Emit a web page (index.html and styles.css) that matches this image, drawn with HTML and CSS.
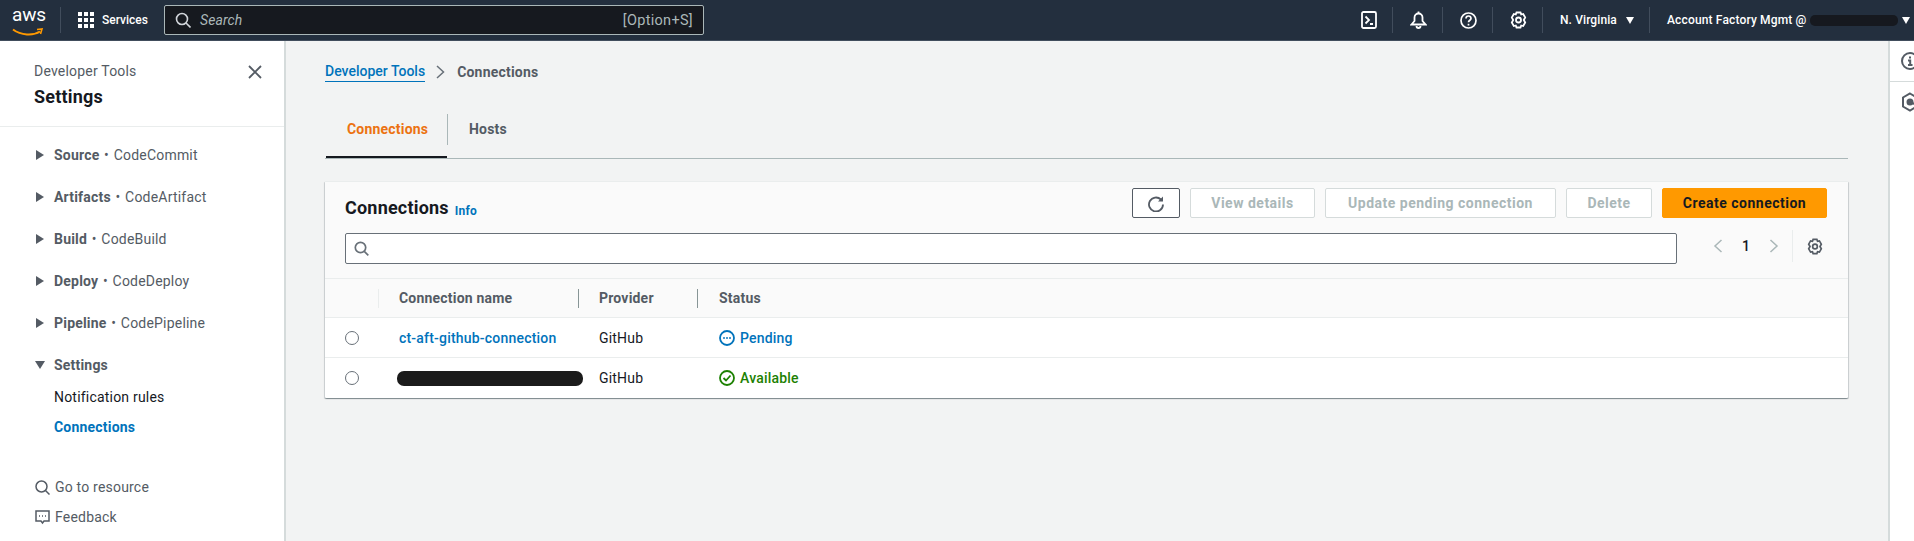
FILE: index.html
```html
<!DOCTYPE html>
<html lang="en">
<head>
  <meta charset="UTF-8" />
  <title>Connections</title>
  <link rel="stylesheet" href="styles.css">
</head>
<body>
  <header class="topbar">
    <div class="logo">
      <span class="logo-text">aws</span>
      <svg class="logo-smile" width="32" height="9" viewBox="0 0 32 9"><path d="M1 1.500C9 7.500 21 8 28 3.500" fill="none" stroke="#f90" stroke-width="2"/><path d="M25 1.500l5-.5-1.500 5" fill="none" stroke="#f90" stroke-width="1.600"/></svg>
    </div>
    <div class="services">
      <svg width="16" height="16" viewBox="0 0 16 16" fill="#fff"><rect width="4" height="4"/><rect x="6" width="4" height="4"/><rect x="12" width="4" height="4"/><rect y="6" width="4" height="4"/><rect x="6" y="6" width="4" height="4"/><rect x="12" y="6" width="4" height="4"/><rect y="12" width="4" height="4"/><rect x="6" y="12" width="4" height="4"/><rect x="12" y="12" width="4" height="4"/></svg>
      <span>Services</span>
    </div>
    <div class="top-search">
      <svg width="16" height="16" viewBox="0 0 16 16" fill="none" stroke="#d1d5db" stroke-width="1.600"><circle cx="7" cy="7" r="5.500"/><path d="M11 11l4.500 4.500"/></svg>
      <span class="top-search-text">Search</span>
      <span class="top-search-key">[Option+S]</span>
    </div>
    <div class="top-icons">
      <div class="top-icon"><svg width="16" height="18" viewBox="0 0 16 18" fill="none" stroke="#fff" stroke-width="1.800"><rect x="1" y="1" width="14" height="16" rx="1.500"/><path d="M4.500 5.500L8 9l-3.500 3.500M9 13h3"/></svg></div>
      <div class="top-icon"><svg width="17" height="18" viewBox="0 0 17 18" fill="none" stroke="#fff" stroke-width="1.800"><path d="M1.500 13.500L4.500 10V6.500a4 4 0 018 0V10l3 3.500z"/><path d="M6.500 15a2 2 0 004 0"/><path d="M8.500 2.500V.5"/></svg></div>
      <div class="top-icon"><svg width="17" height="17" viewBox="0 0 17 17" fill="none" stroke="#fff" stroke-width="1.700"><circle cx="8.500" cy="8.500" r="7.500"/><path d="M6 6.500a2.500 2.500 0 115 0c0 1.700-2.500 1.900-2.500 3.800"/><path d="M8.500 11.800v1.700"/></svg></div>
      <div class="top-icon"><svg width="17" height="18" viewBox="0 0 17 18" fill="none" stroke="#fff" stroke-width="1.800"><path d="M6.500 1.500h4l.7 2 2-.5 2 3.500-1.400 2.500 1.400 2.500-2 3.500-2-.5-.7 2h-4l-.7-2-2 .5-2-3.500L3.200 9 1.800 6.500l2-3.500 2 .5z"/><circle cx="8.500" cy="9" r="2.500"/></svg></div>
      <div class="top-menu region">N. Virginia <span class="caret"></span></div>
      <div class="top-menu account">Account Factory Mgmt @ <span class="redact-top"></span><span class="caret"></span></div>
    </div>
  </header>

  <div class="page">
    <aside class="sidebar">
      <div class="side-head">
        <div>
          <div class="side-service">Developer Tools</div>
          <div class="side-title">Settings</div>
        </div>
        <svg class="side-close" width="14" height="14" viewBox="0 0 14 14" fill="none" stroke="#545b64" stroke-width="1.800"><path d="M1 1l12 12M13 1L1 13"/></svg>
      </div>
      <nav class="side-nav">
        <div class="nav-group"><span class="tri-right"></span><b>Source</b> • CodeCommit</div>
        <div class="nav-group"><span class="tri-right"></span><b>Artifacts</b> • CodeArtifact</div>
        <div class="nav-group"><span class="tri-right"></span><b>Build</b> • CodeBuild</div>
        <div class="nav-group"><span class="tri-right"></span><b>Deploy</b> • CodeDeploy</div>
        <div class="nav-group"><span class="tri-right"></span><b>Pipeline</b> • CodePipeline</div>
        <div class="nav-group open"><span class="tri-down"></span><b>Settings</b></div>
        <div class="nav-sub">Notification rules</div>
        <div class="nav-sub active">Connections</div>
      </nav>
      <div class="side-foot">
        <div class="foot-item"><svg width="15" height="15" viewBox="0 0 15 15" fill="none" stroke="#545b64" stroke-width="1.500"><circle cx="6.500" cy="6.500" r="5.500"/><path d="M10.500 10.500l4 4"/></svg>Go to resource</div>
        <div class="foot-item"><svg width="15" height="15" viewBox="0 0 15 15" fill="none" stroke="#545b64" stroke-width="1.500"><path d="M1 1h13v10H9l-1.500 2L6 11H1z"/><path d="M4 6h1M7 6h1M10 6h1"/></svg>Feedback</div>
      </div>
    </aside>

    <main class="content">
      <div class="crumbs">
        <a class="crumb-link">Developer Tools</a>
        <svg width="9" height="14" viewBox="0 0 9 14" fill="none" stroke="#687078" stroke-width="1.500"><path d="M1 1l6.500 6L1 13"/></svg>
        <span class="crumb-current">Connections</span>
      </div>

      <div class="tabs">
        <div class="tab active">Connections</div>
        <div class="tab">Hosts</div>
      </div>

      <section class="card">
        <div class="card-head">
          <div class="card-top">
            <h2 class="card-title">Connections</h2>
            <a class="info">Info</a>
            <div class="actions">
              <button class="btn icon-btn"><svg width="16" height="17" viewBox="0 0 16 17" fill="none" stroke="#545b64" stroke-width="1.800"><path d="M15 9.500a7 7 0 11-2.100-5L14 5.500"/><path d="M15 1.500v5h-5z" fill="#545b64" stroke="none"/></svg></button>
              <button class="btn view" disabled>View details</button>
              <button class="btn update" disabled>Update pending connection</button>
              <button class="btn del" disabled>Delete</button>
              <button class="btn primary">Create connection</button>
            </div>
          </div>
          <div class="card-filter">
            <div class="filter-box"><svg width="15" height="15" viewBox="0 0 15 15" fill="none" stroke="#687078" stroke-width="1.700"><circle cx="6.500" cy="6.500" r="5.200"/><path d="M10.300 10.300l4 4"/></svg></div>
            <div class="pager">
              <svg width="10" height="14" viewBox="0 0 10 14" fill="none" stroke="#aab7b8" stroke-width="1.500"><path d="M8.500 1L2 7l6.500 6"/></svg>
              <span class="page-num">1</span>
              <svg width="10" height="14" viewBox="0 0 10 14" fill="none" stroke="#aab7b8" stroke-width="1.500"><path d="M1.500 1L8 7l-6.500 6"/></svg>
              <div class="pager-gear"><svg width="16" height="17" viewBox="0 0 17 18" fill="none" stroke="#545b64" stroke-width="1.800"><path d="M6.500 1.500h4l.7 2 2-.5 2 3.500-1.400 2.500 1.400 2.500-2 3.500-2-.5-.7 2h-4l-.7-2-2 .5-2-3.500L3.200 9 1.800 6.500l2-3.500 2 .5z"/><circle cx="8.500" cy="9" r="2.500"/></svg></div>
            </div>
          </div>
        </div>

        <div class="t-row t-head">
          <div class="col-radio"></div>
          <div class="col-name"><span>Connection name</span></div>
          <div class="col-provider"><span>Provider</span></div>
          <div class="col-status"><span>Status</span></div>
        </div>
        <div class="t-row">
          <div class="col-radio"><span class="radio"></span></div>
          <div class="col-name"><a class="conn-link">ct-aft-github-connection</a></div>
          <div class="col-provider">GitHub</div>
          <div class="col-status status-pending"><svg width="16" height="16" viewBox="0 0 16 16" fill="none" stroke="#0073bb" stroke-width="1.800"><circle cx="8" cy="8" r="7"/><path d="M4.300 8h1.400M7.300 8h1.400M10.300 8h1.400"/></svg>Pending</div>
        </div>
        <div class="t-row last">
          <div class="col-radio"><span class="radio"></span></div>
          <div class="col-name"><span class="redact-name"></span></div>
          <div class="col-provider">GitHub</div>
          <div class="col-status status-ok"><svg width="16" height="16" viewBox="0 0 16 16" fill="none" stroke="#1d8102" stroke-width="1.800"><circle cx="8" cy="8" r="7"/><path d="M4.500 8l2.500 2.500 4.500-5"/></svg>Available</div>
        </div>
      </section>
    </main>

    <aside class="rail">
      <div class="rail-item"><svg width="20" height="20" viewBox="0 0 20 20" fill="none" stroke="#545b64" stroke-width="2"><circle cx="10" cy="10" r="8"/><path d="M10 5.500v2M8 9.500h2.200V14M8 14h4.500"/></svg></div>
      <div class="rail-item"><svg width="20" height="20" viewBox="0 0 20 20" fill="none" stroke="#545b64" stroke-width="2"><path d="M10 1.500l7 4v9l-7 4-7-4v-9z"/><circle cx="10" cy="10" r="2.500" fill="#545b64"/><path d="M11 10l5 3"/></svg></div>
    </aside>
  </div>
</body>
</html>
```

FILE: styles.css
```css
* { box-sizing: border-box; }
html, body { height: 100%; }
body {
  margin: 0;
  background: #f2f3f3;
  font-family: "Roboto", "Liberation Sans", sans-serif;
  font-size: 14px;
  letter-spacing: 0.2px;
  color: #16191f;
  overflow: hidden;
  display: flex;
  flex-direction: column;
}

/* top bar */
.topbar {
  height: 41px;
  flex: none;
  display: flex;
  align-items: center;
  background: #232f3e;
  border-bottom: 1px solid #414d5c;
  color: #fff;
  font-size: 12px;
  font-weight: 500;
  letter-spacing: 0.1px;
}
.logo {
  width: 60px;
  height: 40px;
  padding-left: 12px;
}
.logo-text {
  display: block;
  font-size: 19px;
  font-weight: 400;
  line-height: 20px;
  padding-top: 5px;
  letter-spacing: -0.2px;
}
.logo-smile { display: block; margin-top: 3px; }
.services {
  height: 26px;
  width: 104px;
  border-left: 1px solid #414d5c;
  padding-left: 17px;
  display: flex;
  align-items: center;
  gap: 8px;
  font-size: 12px;
  letter-spacing: 0;
}
.top-search {
  width: 540px;
  height: 30px;
  display: flex;
  align-items: center;
  background: #16191f;
  border: 1px solid #aab7b8;
  border-radius: 2px;
  padding: 0 10px;
  gap: 9px;
  color: #aab7b8;
  font-size: 14px;
  font-weight: 400;
}
.top-search-text { font-style: italic; flex: 1; }
.top-search-key { font-size: 14.500px; letter-spacing: 0.3px; }
.top-icons {
  margin-left: auto;
  display: flex;
  align-items: center;
  height: 26px;
}
.top-icon {
  width: 50px;
  height: 26px;
  padding-left: 2px;
  display: flex;
  align-items: center;
  justify-content: center;
  border-right: 1px solid #414d5c;
}
.top-menu {
  height: 26px;
  display: flex;
  align-items: center;
  white-space: pre;
}
.region {
  width: 107px;
  padding-left: 17px;
  border-right: 1px solid #414d5c;
}
.account { width: 264px; padding-left: 17px; letter-spacing: 0.15px; }
.caret {
  width: 0;
  height: 0;
  margin-left: 6px;
  border-left: 4px solid transparent;
  border-right: 4px solid transparent;
  border-top: 7px solid #fff;
}
.account .caret { margin-left: 4px; }
.redact-top {
  width: 88px;
  height: 11px;
  background: #16191f;
  border-radius: 5px;
}

/* page */
.page { flex: 1; display: flex; min-height: 0; }

.sidebar {
  width: 286px;
  flex: none;
  background: #fff;
  border-right: 2px solid #d5dbdb;
  display: flex;
  flex-direction: column;
}
.side-head {
  height: 86px;
  padding: 20px 22px 0 34px;
  display: flex;
  justify-content: space-between;
  align-items: flex-start;
  border-bottom: 1px solid #eaeded;
}
.side-service { color: #545b64; font-size: 14px; line-height: 20px; }
.side-title { font-size: 18px; font-weight: 700; line-height: 24px; margin-top: 4px; }
.side-close { margin-top: 4px; }
.side-nav { padding-top: 7px; }
.nav-group {
  height: 42px;
  padding-left: 36px;
  display: flex;
  align-items: center;
  color: #545b64;
  white-space: pre;
  word-spacing: 1px;
}
.nav-group.open { margin-bottom: -4px; }
.nav-group b { font-weight: 700; }
.tri-right {
  width: 0;
  height: 0;
  margin-right: 10px;
  border-top: 5px solid transparent;
  border-bottom: 5px solid transparent;
  border-left: 8px solid #545b64;
}
.tri-down {
  width: 0;
  height: 0;
  margin-left: -1px;
  margin-right: 9px;
  border-left: 5px solid transparent;
  border-right: 5px solid transparent;
  border-top: 8px solid #545b64;
}
.nav-sub {
  height: 30px;
  padding-left: 54px;
  display: flex;
  align-items: center;
}
.nav-sub.active { color: #0073bb; font-weight: 700; }
.side-foot { margin-top: 30px; padding-left: 35px; }
.foot-item {
  height: 30px;
  display: flex;
  align-items: center;
  gap: 5px;
  color: #545b64;
}

.content {
  flex: 1;
  min-width: 0;
  padding: 0 40px 0 39px;
}
.crumbs {
  height: 57px;
  padding-top: 5px;
  display: flex;
  align-items: center;
  gap: 11px;
}
.crumb-link {
  color: #0073bb;
  border-bottom: 1px solid #0073bb;
  font-weight: 500;
  line-height: 19px;
  letter-spacing: 0;
}
.crumb-current { color: #545b64; font-weight: 700; margin-left: 1px; }
.tabs {
  height: 55px;
  margin-top: 6px;
  padding: 10px 0 0 1px;
  display: flex;
  align-items: flex-start;
  border-bottom: 1px solid #aab7b8;
}
.tab {
  font-weight: 700;
  color: #545b64;
  padding: 0 21px;
  height: 31px;
  line-height: 31px;
  position: relative;
}
.tab.active {
  color: #ec7211;
  border-right: 1px solid #aab7b8;
  width: 122px;
}
.tab.active::after {
  content: "";
  position: absolute;
  left: 0;
  right: 0;
  bottom: -13px;
  height: 2px;
  background: #16191f;
}

.card {
  margin-top: 22px;
  background: #fff;
  border-radius: 1px;
  box-shadow: 0 1px 1px 0 rgba(0,28,36,.3), 1px 1px 1px 0 rgba(0,28,36,.15), -1px 1px 1px 0 rgba(0,28,36,.15);
  border-top: 1px solid #eaeded;
}
.card-head {
  height: 96px;
  background: #fafafa;
  padding: 6px 21px 0 20px;
}
.card-top { display: flex; align-items: center; height: 30px; }
.card-title { margin: 9px 0 0; font-size: 18px; font-weight: 700; line-height: 24px; }
.info { margin-left: 6px; margin-top: 15px; color: #0073bb; font-size: 12px; font-weight: 700; }
.actions { margin-left: auto; display: flex; gap: 10px; }
.btn {
  height: 30px;
  border: 1px solid #d5dbdb;
  border-radius: 2px;
  background: #fff;
  color: #aab7b8;
  font-family: inherit;
  font-size: 14px;
  font-weight: 700;
  letter-spacing: 0.5px;
  padding: 0;
  display: flex;
  align-items: center;
  justify-content: center;
}
.icon-btn { width: 48px; border-color: #545b64; }
.view { width: 125px; }
.update { width: 231px; }
.del { width: 86px; }
.primary { width: 165px; background: #f90; border-color: #f90; color: #16191f; }
.card-filter { display: flex; align-items: flex-start; margin-top: 15px; }
.filter-box {
  width: 1332px;
  height: 31px;
  background: #fff;
  border: 1px solid #687078;
  border-radius: 2px;
  display: flex;
  align-items: center;
  padding-left: 8px;
}
.pager {
  flex: 1;
  height: 32px;
  margin-top: -3px;
  display: flex;
  align-items: center;
  padding-left: 36px;
}
.page-num { width: 46px; text-align: center; font-weight: 500; }
.pager-gear {
  height: 32px;
  margin-left: 13px;
  padding-left: 14px;
  border-left: 1px solid #eaeded;
  display: flex;
  align-items: center;
}

.t-row {
  height: 40px;
  display: flex;
  align-items: center;
  border-top: 1px solid #eaeded;
}
.t-row.last { height: 41px; }
.t-head { height: 39px; background: #fafafa; color: #545b64; font-weight: 700; }
.col-radio { width: 54px; padding-left: 20px; display: flex; align-items: center; }
.col-name { width: 200px; padding-left: 20px; }
.col-provider { width: 119px; padding-left: 20px; }
.col-status { flex: 1; padding-left: 21px; display: flex; align-items: center; gap: 5px; }
.t-head .col-radio { border-right: 1px solid #eaeded; height: 19px; }
.t-head .col-name, .t-head .col-provider { border-right: 1px solid #879596; height: 19px; line-height: 19px; }
.radio {
  width: 14px;
  height: 14px;
  border: 1px solid #687078;
  border-radius: 50%;
  background: #fff;
}
.conn-link { color: #0073bb; font-weight: 500; }
.redact-name {
  display: block;
  width: 186px;
  height: 15px;
  margin-left: -2px;
  background: #1b1b1b;
  border-radius: 7px;
}
.status-pending { color: #0073bb; font-weight: 500; }
.status-ok { color: #1d8102; font-weight: 500; }

.rail {
  width: 26px;
  flex: none;
  background: #fff;
  border-left: 2px solid #d5dbdb;
}
.rail-item {
  height: 41px;
  padding: 10px 0 0 10px;
  border-bottom: 1px solid #d5dbdb;
}
.rail-item:last-child { border-bottom: 0; }
```
